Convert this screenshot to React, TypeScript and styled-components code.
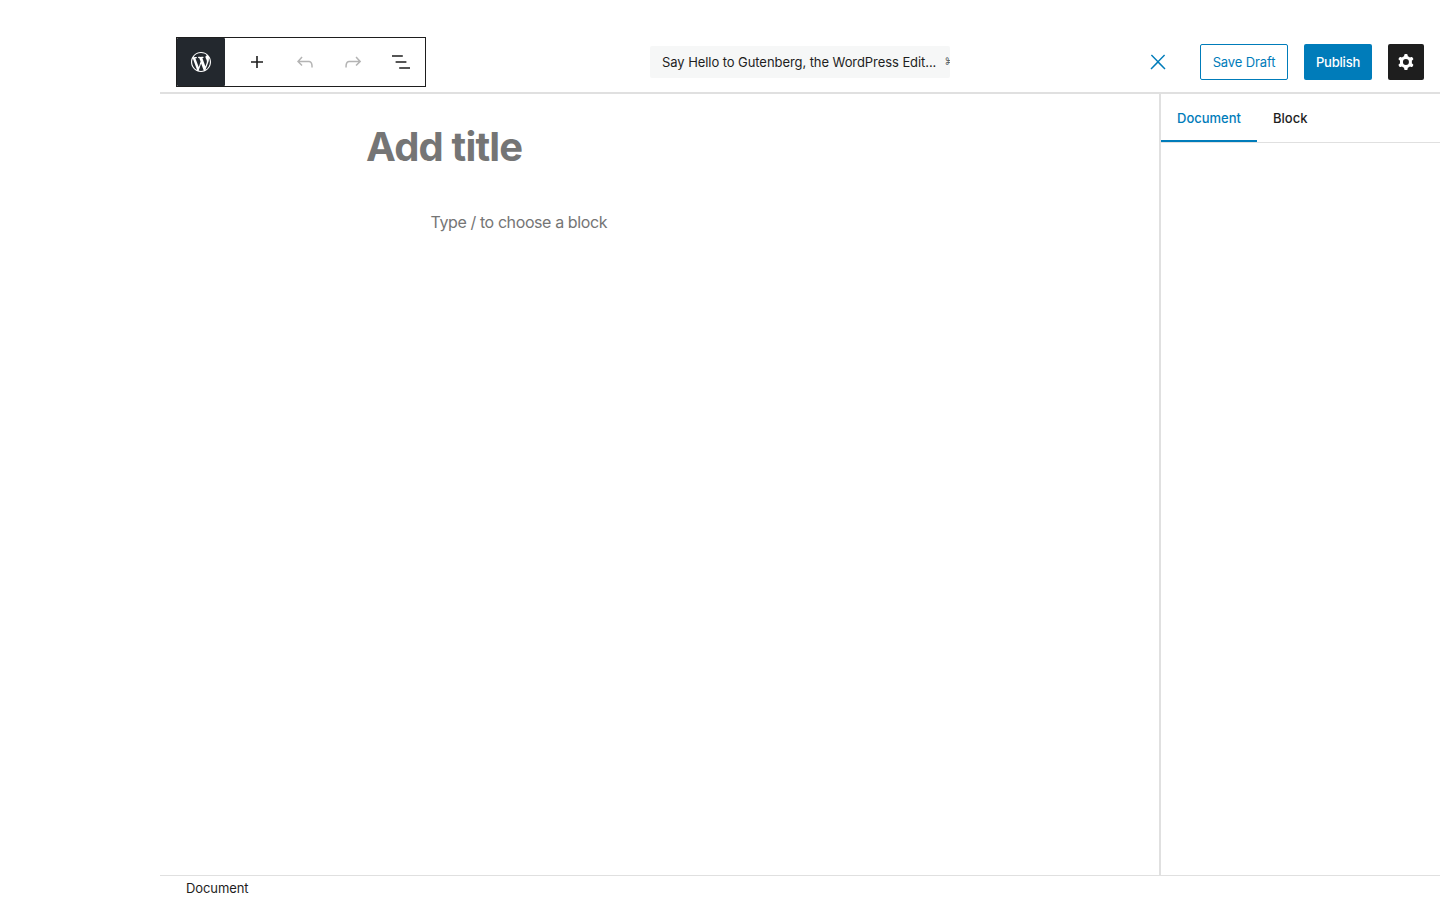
import React from "react";
import styled, { createGlobalStyle } from "styled-components";

const GlobalStyle = createGlobalStyle`
  *, *::before, *::after { box-sizing: border-box; }
  body {
    margin: 0;
    background: #fff;
    color: #1e1e1e;
    font: 400 13px/18px Inter, "Liberation Sans", sans-serif;
    -webkit-font-smoothing: antialiased;
  }
  button { font: inherit; color: inherit; margin: 0; cursor: pointer; }
`;

const Editor = styled.div`
  display: flex;
  flex-direction: column;
  height: 100vh;
  margin-left: 160px;
  padding-top: 30px;
  overflow: hidden;
`;

const Header = styled.header`
  display: grid;
  grid-template-columns: 1fr 300px 1fr;
  align-items: center;
  flex: none;
  height: 64px;
  padding: 2px 16px 0;
  border-bottom: 2px solid #e0e0e0;
`;

const Toolbar = styled.div`
  display: flex;
  width: 250px;
  height: 50px;
  border: 1px solid #1e1e1e;
`;

const HomeButton = styled.button`
  display: grid;
  place-items: center;
  width: 48px;
  padding: 0;
  border: 0;
  border-radius: 1px;
  background: #23282e;
  color: #fff;
`;

const ToolButton = styled.button`
  display: grid;
  place-items: center;
  width: 48px;
  padding: 0;
  border: 0;
  background: none;
  color: ${(p) => (p.disabled ? "#b4b4b4" : "#1e1e1e")};
`;

const ToolGroup = styled.div`
  display: flex;
  padding-left: 8px;
`;

const CommandBar = styled.button`
  display: flex;
  align-items: center;
  height: 32px;
  padding: 0 0 0 12px;
  border: 0;
  border-radius: 2px;
  background: #f6f7f7;
  overflow: hidden;
  white-space: nowrap;
`;

const CommandTitle = styled.span`
  flex: none;
  width: 282.5px;
  text-align: left;
  letter-spacing: -0.07px;
`;

const Shortcut = styled.span`
  flex: none;
  color: #50575e;
  font-family: "DejaVu Sans", sans-serif;
  font-size: 10px;
`;

const Actions = styled.div`
  display: flex;
  justify-content: flex-end;
  align-items: center;
  gap: 16px;
`;

const ActionButton = styled.button<{ $kind: "icon" | "outline" | "primary" | "dark"; $width: number }>`
  display: grid;
  place-items: center;
  width: ${(p) => p.$width}px;
  height: 36px;
  padding: 0;
  border-radius: 2px;
  border: ${(p) => (p.$kind === "outline" ? "1px solid #007cba" : "0")};
  background: ${(p) => ({ icon: "none", outline: "#fff", primary: "#007cba", dark: "#1e1e1e" })[p.$kind]};
  color: ${(p) => (p.$kind === "primary" || p.$kind === "dark" ? "#fff" : "#007cba")};
  font-weight: ${(p) => (p.$kind === "primary" ? 500 : 400)};
  letter-spacing: ${(p) => (p.$kind === "primary" ? "-0.2px" : "-0.12px")};
  white-space: nowrap;
`;

const CloseSlot = styled.div`
  margin-right: 8px;
`;

const Body = styled.div`
  display: flex;
  flex: 1;
  min-height: 0;
`;

const Canvas = styled.main`
  flex: 1;
  color: #757575;
`;

const PostTitle = styled.h1`
  margin: 29px 0 0 206px;
  font-size: 40px;
  line-height: 48px;
  font-weight: 700;
  letter-spacing: -0.82px;
`;

const Prompt = styled.p`
  margin: 37px 0 0 270.5px;
  font-size: 16px;
  line-height: 28px;
  letter-spacing: -0.4px;
`;

const Sidebar = styled.aside`
  width: 281px;
  border-left: 2px solid #e0e0e0;
`;

const Tabs = styled.div`
  display: flex;
  height: 49px;
  border-bottom: 1px solid #e0e0e0;
`;

const Tab = styled.button<{ $active?: boolean }>`
  height: 48px;
  padding: 0 16px;
  border: 0;
  background: none;
  font-weight: 500;
  color: ${(p) => (p.$active ? "#007cba" : "#1e1e1e")};
  box-shadow: ${(p) => (p.$active ? "inset 0 -2px #007cba" : "none")};
`;

const Footer = styled.footer`
  flex: none;
  display: flex;
  align-items: center;
  height: 25px;
  padding-left: 26px;
  border-top: 1px solid #e0e0e0;
  letter-spacing: -0.1px;
`;

const Icon = ({ d, viewBox = "0 0 24 24" }: { d: string; viewBox?: string }) => (
  <svg width="24" height="24" viewBox={viewBox} fill="currentColor" aria-hidden="true">
    <path fillRule="evenodd" clipRule="evenodd" d={d} />
  </svg>
);

const icons = {
  wordpress:
    "M20 10c0-5.51-4.49-10-10-10C4.48 0 0 4.49 0 10c0 5.52 4.48 10 10 10 5.51 0 10-4.48 10-10zM7.78 15.37L4.37 6.22c.55-.02 1.17-.08 1.17-.08.5-.06.44-1.13-.06-1.11 0 0-1.45.11-2.37.11-.18 0-.37 0-.58-.01C4.12 2.69 6.87 1.11 10 1.11c2.33 0 4.45.87 6.05 2.34-.68-.11-1.65.39-1.65 1.58 0 .74.45 1.36.9 2.1.35.61.55 1.36.55 2.46 0 1.49-1.4 5-1.4 5l-3.03-8.37c.54-.02.82-.17.82-.17.5-.05.44-1.25-.06-1.22 0 0-1.44.12-2.38.12-.87 0-2.33-.12-2.33-.12-.5-.03-.56 1.2-.06 1.22l.92.08 1.26 3.41zM17.41 10c.24-.64.74-1.87.43-4.25.7 1.29 1.05 2.71 1.05 4.25 0 3.29-1.73 6.24-4.4 7.78.97-2.59 1.94-5.2 2.92-7.78zM6.1 18.09C3.12 16.65 1.11 13.53 1.11 10c0-1.3.23-2.48.72-3.59C3.25 10.3 4.67 14.2 6.1 18.09zm4.03-6.63l2.58 6.98c-.86.29-1.76.45-2.71.45-.79 0-1.57-.11-2.29-.33.81-2.38 1.62-4.74 2.42-7.1z",
  plus: "M18 11.2h-5.2V6h-1.6v5.2H6v1.6h5.2V18h1.6v-5.2H18z",
  undo: "M18.3 11.7c-.6-.6-1.4-.9-2.3-.9H6.7l2.9-3.3-1.1-1-4.5 5L8.5 16l1-1-2.7-2.7H16c.5 0 .9.2 1.3.5 1 1 1 3.4 1 4.5v.3h1.5v-.2c0-1.5 0-4.3-1.5-5.7z",
  redo: "M15.6 6.5l-1.1 1 2.9 3.3H8c-.9 0-1.7.3-2.3.9-1.4 1.5-1.4 4.2-1.4 5.6v.2h1.5v-.3c0-1.1 0-3.5 1-4.5.3-.3.7-.5 1.3-.5h9.2L14.5 15l1.1 1.1 4.6-4.6-4.6-5z",
  listView: "M13.8 5.2H3v1.5h10.8V5.2zm-3.6 12v1.5H21v-1.5H10.2zm7.2-6H6.6v1.5h10.8v-1.5z",
  close: "M13 11.8l6.1-6.3-1-1-6.1 6.2-6.1-6.2-1 1 6.1 6.3-6.5 6.7 1 1 6.5-6.6 6.5 6.6 1-1z",
  cog: "M10.289 4.836A1 1 0 0111.275 4h1.306a1 1 0 01.987.836l.244 1.466c.787.26 1.503.679 2.108 1.218l1.393-.522a1 1 0 011.216.437l.653 1.13a1 1 0 01-.23 1.273l-1.148.944a6.025 6.025 0 010 2.435l1.149.946a1 1 0 01.23 1.272l-.653 1.13a1 1 0 01-1.216.437l-1.394-.522c-.605.54-1.32.958-2.108 1.218l-.244 1.466a1 1 0 01-.987.836h-1.306a1 1 0 01-.986-.836l-.244-1.466a5.995 5.995 0 01-2.108-1.218l-1.394.522a1 1 0 01-1.217-.436l-.653-1.131a1 1 0 01.23-1.272l1.149-.946a6.026 6.026 0 010-2.435l-1.148-.944a1 1 0 01-.23-1.272l.653-1.131a1 1 0 011.217-.437l1.393.522a5.994 5.994 0 012.108-1.218l.244-1.466zM14.929 12a3 3 0 11-6 0 3 3 0 016 0z",
};

export default function App() {
  return (
    <>
      <GlobalStyle />
      <Editor>
        <Header>
          <Toolbar>
            <HomeButton aria-label="View posts"><Icon d={icons.wordpress} viewBox="-2 -2 24 24" /></HomeButton>
            <ToolGroup>
              <ToolButton aria-label="Add block"><Icon d={icons.plus} /></ToolButton>
              <ToolButton aria-label="Undo" disabled><Icon d={icons.undo} /></ToolButton>
              <ToolButton aria-label="Redo" disabled><Icon d={icons.redo} /></ToolButton>
              <ToolButton aria-label="List view"><Icon d={icons.listView} /></ToolButton>
            </ToolGroup>
          </Toolbar>
          <CommandBar>
            <CommandTitle>Say Hello to Gutenberg, the WordPress Edit...</CommandTitle>
            <Shortcut>⌘</Shortcut>
          </CommandBar>
          <Actions>
            <CloseSlot>
              <ActionButton $kind="icon" $width={36} aria-label="Close"><Icon d={icons.close} /></ActionButton>
            </CloseSlot>
            <ActionButton $kind="outline" $width={88}>Save Draft</ActionButton>
            <ActionButton $kind="primary" $width={68}>Publish</ActionButton>
            <ActionButton $kind="dark" $width={36} aria-label="Settings"><Icon d={icons.cog} /></ActionButton>
          </Actions>
        </Header>
        <Body>
          <Canvas>
            <PostTitle>Add title</PostTitle>
            <Prompt>Type / to choose a block</Prompt>
          </Canvas>
          <Sidebar>
            <Tabs>
              <Tab $active>Document</Tab>
              <Tab>Block</Tab>
            </Tabs>
          </Sidebar>
        </Body>
        <Footer>Document</Footer>
      </Editor>
    </>
  );
}
